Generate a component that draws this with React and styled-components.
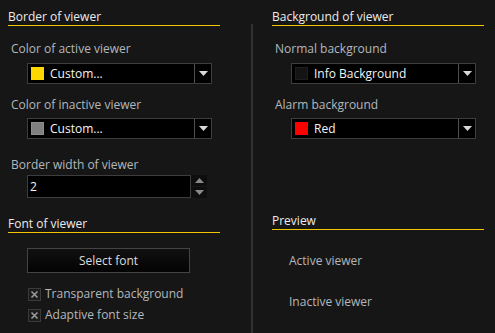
import React from "react";
import styled, { createGlobalStyle } from "styled-components";

const Global = createGlobalStyle`
  html, body {
    margin: 0;
    padding: 0;
    background: #161616;
  }
  body {
    font-family: "Open Sans", "Noto Sans", sans-serif;
    font-size: 12px;
  }
`;

const Page = styled.div`
  width: 495px;
  height: 333px;
  display: flex;
  background: #161616;
  overflow: hidden;
`;

const Column = styled.div`
  display: flex;
  flex-direction: column;
  width: ${(p) => p.$width}px;
  padding-left: ${(p) => p.$pad}px;
  box-sizing: border-box;
`;

const Divider = styled.div`
  width: 2px;
  margin-top: 24px;
  background: #2e3338;
`;

const Header = styled.div`
  width: 212px;
  margin-top: ${(p) => p.$top}px;
  line-height: 16px;
  color: #ececec;
  border-bottom: 1px solid #f2c600;
`;

const Label = styled.div`
  margin-top: ${(p) => p.$top}px;
  margin-left: 3px;
  line-height: 16px;
  color: #b3b8bd;
`;

const Combo = styled.div`
  margin-top: ${(p) => p.$top}px;
  margin-left: 19px;
  width: 185px;
  height: 21px;
  box-sizing: border-box;
  border: 1px solid #3d3d3d;
  background: #000;
  display: flex;
  align-items: center;
`;

const Swatch = styled.span`
  width: 13px;
  height: 13px;
  margin-left: 3px;
  box-sizing: border-box;
  background: ${(p) => p.$color};
  border: 1px solid ${(p) => p.$edge || p.$color};
`;

const ComboText = styled.span`
  flex: 1;
  margin-left: 6px;
  color: #f4f4f4;
  line-height: 16px;
`;

const ArrowBox = styled.span`
  width: 16px;
  height: 100%;
  border-left: 1px solid #505050;
  display: flex;
  align-items: center;
  justify-content: center;
`;

const Spin = styled.div`
  margin-top: ${(p) => p.$top}px;
  margin-left: 19px;
  display: flex;
  height: 23px;
`;

const SpinInput = styled.div`
  width: 164px;
  box-sizing: border-box;
  border: 1px solid #3d3d3d;
  background: #000;
  color: #f4f4f4;
  padding-left: 2px;
  display: flex;
  align-items: center;
`;

const SpinButtons = styled.div`
  width: 16px;
  display: flex;
  flex-direction: column;
  gap: 1px;
`;

const SpinButton = styled.span`
  flex: 1;
  background: #0e0e0e;
  display: flex;
  align-items: center;
  justify-content: center;
`;

const Button = styled.div`
  margin-top: ${(p) => p.$top}px;
  margin-left: 19px;
  width: 163px;
  height: 25px;
  box-sizing: border-box;
  border: 1px solid #444;
  background: linear-gradient(#111, #030303);
  color: #dcdcdc;
  display: flex;
  align-items: center;
  justify-content: center;
`;

const Check = styled.label`
  margin-top: ${(p) => p.$top}px;
  margin-left: 20px;
  display: flex;
  align-items: center;
  gap: 4px;
  color: #b3b8bd;
  line-height: 16px;
`;

const Box = styled.span`
  width: 13px;
  height: 13px;
  box-sizing: border-box;
  border: 1px solid #3a3a3a;
  background: #1c1c1c;
  display: flex;
  align-items: center;
  justify-content: center;
`;

const PreviewText = styled.div`
  margin-top: ${(p) => p.$top}px;
  margin-left: 17px;
  line-height: 16px;
  color: #b3b8bd;
`;

const Tri = ({ up, color = "#d8d8d8" }) => (
  <svg width="9" height="5" viewBox="0 0 9 5">
    <path d={up ? "M0 5 L4.5 0 L9 5 Z" : "M0 0 L9 0 L4.5 5 Z"} fill={color} />
  </svg>
);

const ComboBox = ({ top, color, edge, text }) => (
  <Combo $top={top}>
    <Swatch $color={color} $edge={edge} />
    <ComboText>{text}</ComboText>
    <ArrowBox>
      <Tri />
    </ArrowBox>
  </Combo>
);

const CheckRow = ({ top, text }) => (
  <Check $top={top}>
    <Box>
      <svg width="9" height="9" viewBox="0 0 9 9">
        <path d="M1.5 1.5 L7.5 7.5 M7.5 1.5 L1.5 7.5" stroke="#9a9a9a" strokeWidth="1.6" />
      </svg>
    </Box>
    {text}
  </Check>
);

export default function App() {
  return (
    <Page>
      <Global />
      <Column $width={251} $pad={8}>
        <Header $top={9}>Border of viewer</Header>
        <Label $top={15}>Color of active viewer</Label>
        <ComboBox top={6} color="#ffd700" text="Custom..." />
        <Label $top={13}>Color of inactive viewer</Label>
        <ComboBox top={5} color="#808080" edge="#8c8c8c" text="Custom..." />
        <Label $top={18}>Border width of viewer</Label>
        <Spin $top={2}>
          <SpinInput>2</SpinInput>
          <SpinButtons>
            <SpinButton>
              <Tri up color="#8a8a8a" />
            </SpinButton>
            <SpinButton>
              <Tri color="#8a8a8a" />
            </SpinButton>
          </SpinButtons>
        </Spin>
        <Header $top={18}>Font of viewer</Header>
        <Button $top={15}>Select font</Button>
        <CheckRow top={13} text="Transparent background" />
        <CheckRow top={5} text="Adaptive font size" />
      </Column>
      <Divider />
      <Column $width={242} $pad={19}>
        <Header $top={9}>Background of viewer</Header>
        <Label $top={15}>Normal background</Label>
        <ComboBox top={6} color="#141414" edge="#1e1e1e" text="Info Background" />
        <Label $top={13}>Alarm background</Label>
        <ComboBox top={5} color="#ff0000" text="Red" />
        <Header $top={74}>Preview</Header>
        <PreviewText $top={23}>Active viewer</PreviewText>
        <PreviewText $top={25}>Inactive viewer</PreviewText>
      </Column>
    </Page>
  );
}
